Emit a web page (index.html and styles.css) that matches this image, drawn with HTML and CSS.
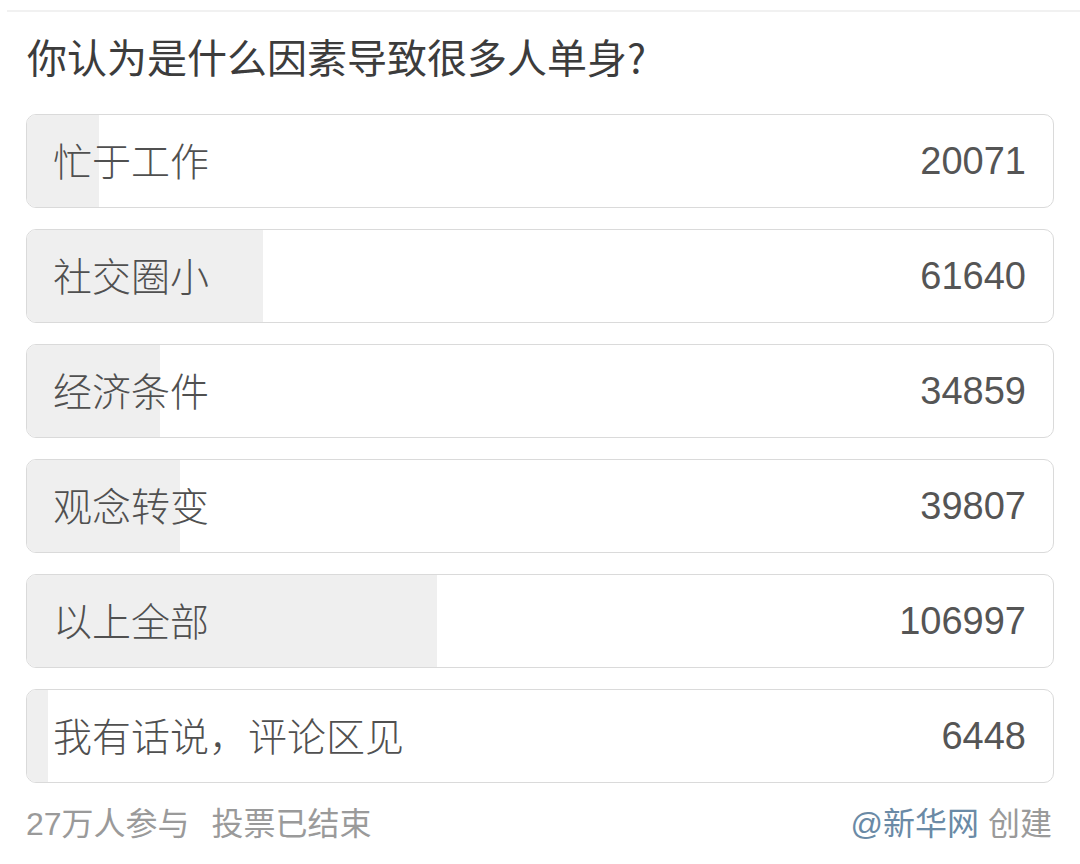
FILE: index.html
```html
<!DOCTYPE html>
<html lang="zh-CN">
<head>
<meta charset="utf-8">
<title>投票</title>
<link rel="stylesheet" href="styles.css">
</head>
<body>
<div class="topline"></div>
<div class="poll">
  <h1 class="title">你认为是什么因素导致很多人单身?</h1>
  <div class="options">
    <div class="option"><div class="fill" style="width:7.0%"></div><span class="label">忙于工作</span><span class="count">20071</span></div>
    <div class="option"><div class="fill" style="width:23.0%"></div><span class="label">社交圈小</span><span class="count">61640</span></div>
    <div class="option"><div class="fill" style="width:13.0%"></div><span class="label">经济条件</span><span class="count">34859</span></div>
    <div class="option"><div class="fill" style="width:14.9%"></div><span class="label">观念转变</span><span class="count">39807</span></div>
    <div class="option"><div class="fill" style="width:40.0%"></div><span class="label">以上全部</span><span class="count">106997</span></div>
    <div class="option"><div class="fill" style="width:2.0%"></div><span class="label">我有话说，评论区见</span><span class="count">6448</span></div>
  </div>
  <div class="footer">
    <span class="meta">27万人参与<span class="sep"></span>投票已结束</span>
    <span class="creator"><span class="account">@新华网</span> 创建</span>
  </div>
</div>
</body>
</html>
```

FILE: styles.css
```css
html, body {
  margin: 0;
  padding: 0;
  background: #ffffff;
}

body {
  font-family: "Liberation Sans", "Noto Sans CJK SC", sans-serif;
  color: #555555;
  width: 1080px;
  height: 864px;
  overflow: hidden;
}

.topline {
  height: 2px;
  margin: 10px 0 0 7px;
  background: #f1f1f1;
}

.poll {
  padding: 0 26px;
}

.title {
  margin: 0;
  padding-left: 1px;
  height: 102px;
  line-height: 88px;
  font-size: 40px;
  font-weight: normal;
  color: #3c3c3c;
  font-family: "Noto Sans CJK SC", sans-serif;
}

.options {
  display: flex;
  flex-direction: column;
  gap: 21px;
}

.option {
  position: relative;
  height: 94px;
  box-sizing: border-box;
  border: 1.5px solid #dadada;
  border-radius: 10px;
  overflow: hidden;
  display: flex;
  align-items: center;
  justify-content: space-between;
  padding: 0 27px 0 26px;
}

.fill {
  position: absolute;
  left: 0;
  top: 0;
  bottom: 0;
  background: #efefef;
}

.label {
  position: relative;
  margin-bottom: 5px;
  font-family: "Noto Sans CJK SC", sans-serif;
  font-size: 39px;
  font-weight: 300;
  color: #505050;
}

.count {
  position: relative;
  font-size: 38px;
  color: #555555;
}

.footer {
  display: flex;
  justify-content: space-between;
  align-items: center;
  height: 40px;
  margin-top: 18px;
  font-size: 32px;
  color: #9a9a9a;
  font-family: "Liberation Sans", "Noto Sans CJK SC", sans-serif;
}

.sep {
  display: inline-block;
  width: 22px;
}

.creator {
  padding-right: 2px;
}

.account {
  color: #6a8aa6;
}
```
